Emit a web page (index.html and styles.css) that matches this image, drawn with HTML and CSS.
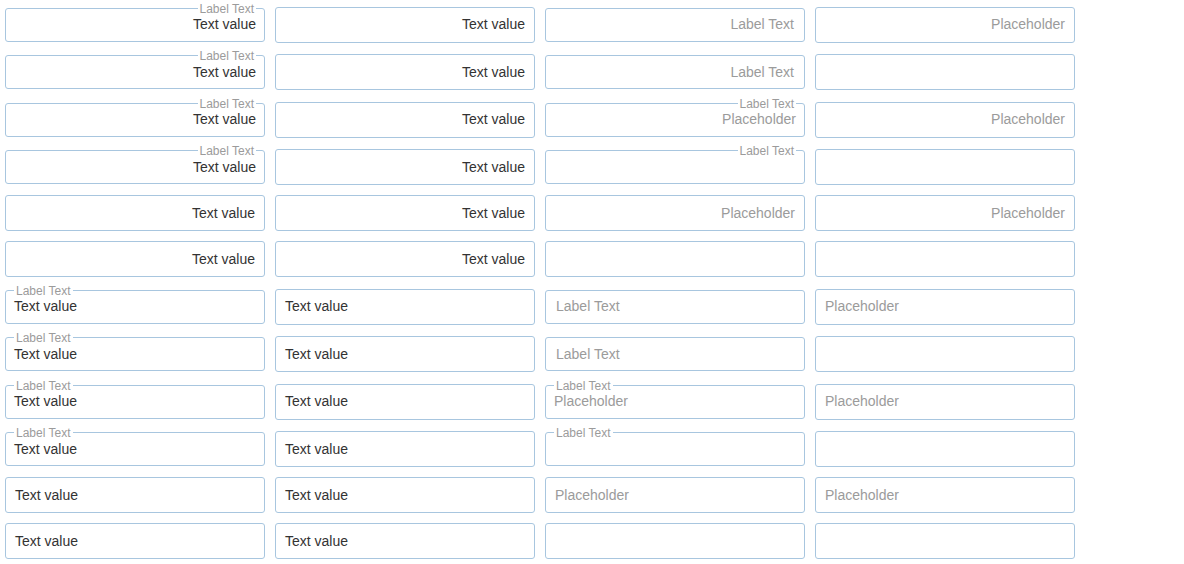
FILE: index.html
```html
<!DOCTYPE html>
<html lang="en">
<head>
<meta charset="utf-8">
<title>Text fields</title>
<link rel="stylesheet" href="styles.css">
</head>
<body>
<div class="grid">
  <!-- row 1 -->
  <div class="box lg r"><span class="lbl">Label Text</span><span class="val">Text value</span></div>
  <div class="box pl r"><span class="val">Text value</span></div>
  <div class="box nl r"><span class="ph">Label Text</span></div>
  <div class="box pl r"><span class="ph">Placeholder</span></div>
  <!-- row 2 -->
  <div class="box lg r dn"><span class="lbl">Label Text</span><span class="val">Text value</span></div>
  <div class="box pl r dn"><span class="val">Text value</span></div>
  <div class="box nl r dn"><span class="ph">Label Text</span></div>
  <div class="box pl r dn"></div>
  <!-- row 3 -->
  <div class="box lg r"><span class="lbl">Label Text</span><span class="val">Text value</span></div>
  <div class="box pl r"><span class="val">Text value</span></div>
  <div class="box lg r"><span class="lbl">Label Text</span><span class="ph">Placeholder</span></div>
  <div class="box pl r"><span class="ph">Placeholder</span></div>
  <!-- row 4 -->
  <div class="box lg r dn"><span class="lbl">Label Text</span><span class="val">Text value</span></div>
  <div class="box pl r dn"><span class="val">Text value</span></div>
  <div class="box lg r dn"><span class="lbl">Label Text</span></div>
  <div class="box pl r dn"></div>
  <!-- row 5 -->
  <div class="box pl lo r"><span class="val">Text value</span></div>
  <div class="box pl lo r"><span class="val">Text value</span></div>
  <div class="box pl lo r"><span class="ph">Placeholder</span></div>
  <div class="box pl lo r"><span class="ph">Placeholder</span></div>
  <!-- row 6 -->
  <div class="box pl lo r"><span class="val">Text value</span></div>
  <div class="box pl lo r"><span class="val">Text value</span></div>
  <div class="box pl lo r"></div>
  <div class="box pl lo r"></div>
  <!-- row 7 -->
  <div class="box lg"><span class="lbl">Label Text</span><span class="val">Text value</span></div>
  <div class="box pl"><span class="val">Text value</span></div>
  <div class="box nl"><span class="ph">Label Text</span></div>
  <div class="box pl"><span class="ph">Placeholder</span></div>
  <!-- row 8 -->
  <div class="box lg dn"><span class="lbl">Label Text</span><span class="val">Text value</span></div>
  <div class="box pl dn"><span class="val">Text value</span></div>
  <div class="box nl dn"><span class="ph">Label Text</span></div>
  <div class="box pl dn"></div>
  <!-- row 9 -->
  <div class="box lg"><span class="lbl">Label Text</span><span class="val">Text value</span></div>
  <div class="box pl"><span class="val">Text value</span></div>
  <div class="box lg"><span class="lbl">Label Text</span><span class="ph">Placeholder</span></div>
  <div class="box pl"><span class="ph">Placeholder</span></div>
  <!-- row 10 -->
  <div class="box lg dn"><span class="lbl">Label Text</span><span class="val">Text value</span></div>
  <div class="box pl dn"><span class="val">Text value</span></div>
  <div class="box lg dn"><span class="lbl">Label Text</span></div>
  <div class="box pl dn"></div>
  <!-- row 11 -->
  <div class="box pl lo"><span class="val">Text value</span></div>
  <div class="box pl lo"><span class="val">Text value</span></div>
  <div class="box pl lo"><span class="ph">Placeholder</span></div>
  <div class="box pl lo"><span class="ph">Placeholder</span></div>
  <!-- row 12 -->
  <div class="box pl lo"><span class="val">Text value</span></div>
  <div class="box pl lo"><span class="val">Text value</span></div>
  <div class="box pl lo"></div>
  <div class="box pl lo"></div>
</div>
</body>
</html>
```

FILE: styles.css
```css
html, body {
  margin: 0;
  padding: 0;
  background: #ffffff;
}

body {
  font-family: "Liberation Sans", Arial, sans-serif;
  font-size: 14px;
  color: #333333;
}

.grid {
  display: grid;
  grid-template-columns: repeat(4, 260px);
  grid-template-rows: 37px 38px 37px 36px 36px 38px 37px 38px 37px 36px 36px 36px;
  column-gap: 10px;
  row-gap: 10px;
  padding: 7px 5px 0 5px;
  align-items: start;
}

.box {
  position: relative;
  box-sizing: border-box;
  border: 1px solid #a8c6df;
  border-radius: 3px;
  background: #ffffff;
  white-space: nowrap;
}

/* plain input: 36px tall */
.box.pl {
  height: 36px;
  line-height: 32px;
  padding: 0 9px 0 9px;
}

/* plain input in a row without labelled fields */
.box.pl.lo {
  line-height: 34px;
}

/* floating-label field without legend: 34px tall */
.box.nl {
  height: 34px;
  margin-top: 1px;
  line-height: 30px;
  padding: 0 10px 0 10px;
}

/* field with notched label: 34px tall */
.box.lg {
  height: 34px;
  margin-top: 1px;
  line-height: 30px;
  padding: 0 8px 0 8px;
}

.box.dn {
  padding-top: 1px;
}

.box.r {
  text-align: right;
}

.val {
  color: #333333;
}

.ph {
  color: #9b9b9b;
}

.lbl {
  position: absolute;
  top: -7px;
  left: 8px;
  padding: 0 2px;
  background: #ffffff;
  font-size: 12px;
  line-height: 14px;
  color: #9b9b9b;
}

.box.dn .lbl {
  top: -7px;
}

.box.r .lbl {
  left: auto;
  right: 8px;
}
```
